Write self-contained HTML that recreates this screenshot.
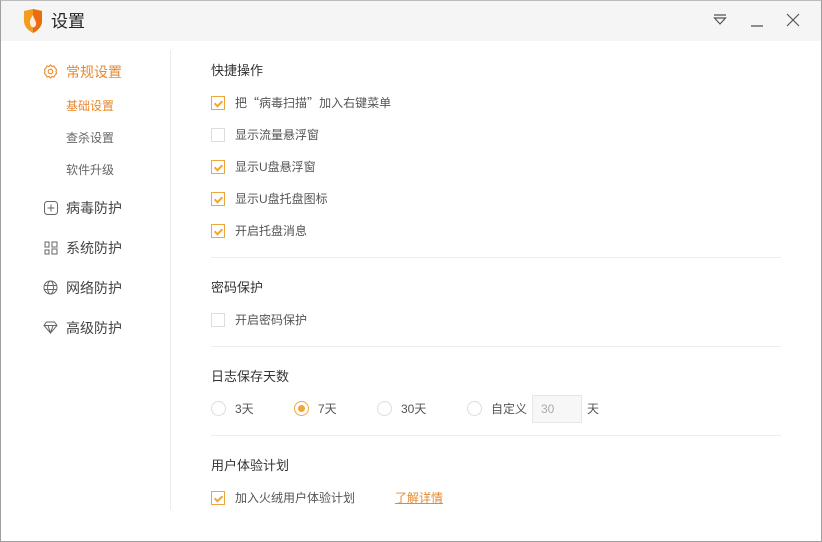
<!DOCTYPE html>
<html><head><meta charset="utf-8"><style>
*{margin:0;padding:0;box-sizing:border-box}
body{width:822px;height:542px;background:#fff;font-family:"Liberation Sans","Noto Sans CJK SC",sans-serif;position:relative;overflow:hidden;color:#333}
.win{position:absolute;left:0;top:0;width:822px;height:542px;border:1px solid #a0a0a0;border-top-color:#bbb}
.title{position:absolute;left:1px;top:1px;width:820px;height:40px;background:#f5f5f5}
.t{position:absolute;white-space:nowrap;line-height:1}
.side{font-size:14px;color:#444}
.sub{font-size:12px;color:#666}
.h{font-size:13px;color:#333}
.lbl{font-size:12px;color:#555}
.cb{position:absolute;width:14px;height:14px;border:1px solid #ddd;background:#fff}
.cb.on{border-color:#f0a53a}
.cb.on:after{content:"";position:absolute;left:4px;top:2px;width:3px;height:6px;border:solid #f0a53a;border-width:0 2px 2px 0;transform:rotate(45deg)}
.rd{position:absolute;width:15px;height:15px;border:1px solid #ddd;border-radius:50%}
.rd.on{border-color:#f0a53a}
.rd.on:after{content:"";position:absolute;left:3px;top:3px;width:7px;height:7px;border-radius:50%;background:#f0a53a}
.hr{position:absolute;left:211px;width:570px;height:1px;background:#ececec}
svg{position:absolute}
.cjk{font-family:"Noto Sans CJK SC",sans-serif}
</style></head><body>
<div class="win"></div>
<div class="title"></div>
<svg style="left:23px;top:9px" width="20" height="24" viewBox="0 0 20 24"><path d="M1 2 L10 0 L19 2 L19 12 C19 18 14 22 10 24 C6 22 1 18 1 12Z" fill="#f39c1f"/><path d="M10 0 L19 2 L19 12 C19 18 14 22 10 24Z" fill="#e96d0e"/><path d="M10 6 C7 10 6 13 8 17 C9 19 12 19 13 16 C14 13 11 10 10 6Z" fill="#fff" opacity=".85"/></svg>
<div class="t" style="left:51px;top:13px;font-size:17px;color:#222">设置</div>
<svg style="left:713px;top:14px" width="14" height="12"><path d="M1 1H13M1.5 4H12.5L7 10Z" fill="none" stroke="#555" stroke-width="1.2"/></svg>
<svg style="left:750px;top:14px" width="14" height="14"><path d="M1 12H13" stroke="#555" stroke-width="1.3"/></svg>
<svg style="left:786px;top:13px" width="14" height="14"><path d="M1 1L13 13M13 1L1 13" stroke="#555" stroke-width="1.2"/></svg>
<div style="position:absolute;left:170px;top:50px;width:1px;height:460px;background:#ececec"></div>
<svg style="left:43px;top:64px" width="15" height="15" viewBox="0 0 15 15"><path d="M7.5 1L9 2.5 11 2 12 4 13.5 5.5 13 7.5 13.5 9.5 12 11 11 13 9 12.5 7.5 14 6 12.5 4 13 3 11 1.5 9.5 2 7.5 1.5 5.5 3 4 4 2 6 2.5Z" fill="none" stroke="#e9882d" stroke-width="1.1"/><circle cx="7.5" cy="7.5" r="2.3" fill="none" stroke="#e9882d" stroke-width="1.1"/></svg>
<div class="t side" style="left:66px;top:65px;color:#e9882d">常规设置</div>
<div class="t sub" style="left:66px;top:100px;color:#e9882d">基础设置</div>
<div class="t sub" style="left:66px;top:132px">查杀设置</div>
<div class="t sub" style="left:66px;top:164px">软件升级</div>
<svg style="left:44px;top:201px" width="14" height="14"><rect x=".5" y=".5" width="13" height="13" rx="3" fill="none" stroke="#666"/><path d="M7 3.5V10.5M3.5 7H10.5" stroke="#666"/></svg>
<div class="t side" style="left:66px;top:201px">病毒防护</div>
<svg style="left:44px;top:241px" width="14" height="14"><path d="M1 1H5V6H1ZM1 9H5V13H1ZM8 1H13V6H8ZM8 8H13V13H8Z" fill="none" stroke="#666"/></svg>
<div class="t side" style="left:66px;top:241px">系统防护</div>
<svg style="left:43px;top:280px" width="15" height="15"><circle cx="7.5" cy="7.5" r="6.5" fill="none" stroke="#666"/><ellipse cx="7.5" cy="7.5" rx="3" ry="6.5" fill="none" stroke="#666"/><path d="M1 5.5H14M1 9.5H14" stroke="#666"/></svg>
<div class="t side" style="left:66px;top:281px">网络防护</div>
<svg style="left:43px;top:321px" width="15" height="13"><path d="M3.5 1H11.5L14 4.5 7.5 12 1 4.5ZM1 4.5H14M5 4.5 7.5 12 10 4.5" fill="none" stroke="#666"/></svg>
<div class="t side" style="left:66px;top:321px">高级防护</div>

<div class="t h" style="left:211px;top:64px">快捷操作</div>
<div class="cb on" style="left:211px;top:96px"></div><div class="t lbl" style="left:235px;top:97px">把<span class="cjk">“</span>病毒扫描<span class="cjk">”</span>加入右键菜单</div>
<div class="cb" style="left:211px;top:128px"></div><div class="t lbl" style="left:235px;top:129px">显示流量悬浮窗</div>
<div class="cb on" style="left:211px;top:160px"></div><div class="t lbl" style="left:235px;top:161px">显示U盘悬浮窗</div>
<div class="cb on" style="left:211px;top:192px"></div><div class="t lbl" style="left:235px;top:193px">显示U盘托盘图标</div>
<div class="cb on" style="left:211px;top:224px"></div><div class="t lbl" style="left:235px;top:225px">开启托盘消息</div>
<div class="hr" style="top:257px"></div>
<div class="t h" style="left:211px;top:281px">密码保护</div>
<div class="cb" style="left:211px;top:313px"></div><div class="t lbl" style="left:235px;top:314px">开启密码保护</div>
<div class="hr" style="top:346px"></div>
<div class="t h" style="left:211px;top:370px">日志保存天数</div>
<div class="rd" style="left:211px;top:401px"></div><div class="t lbl" style="left:235px;top:403px">3天</div>
<div class="rd on" style="left:294px;top:401px"></div><div class="t lbl" style="left:318px;top:403px">7天</div>
<div class="rd" style="left:377px;top:401px"></div><div class="t lbl" style="left:401px;top:403px">30天</div>
<div class="rd" style="left:467px;top:401px"></div><div class="t lbl" style="left:491px;top:403px">自定义</div>
<div style="position:absolute;left:532px;top:395px;width:50px;height:28px;background:#f7f7f7;border:1px solid #e6e6e6"></div>
<div class="t" style="left:541px;top:403px;font-size:12px;color:#aaa">30</div>
<div class="t lbl" style="left:587px;top:403px">天</div>
<div class="hr" style="top:435px"></div>
<div class="t h" style="left:211px;top:459px">用户体验计划</div>
<div class="cb on" style="left:211px;top:491px"></div><div class="t lbl" style="left:235px;top:492px">加入火绒用户体验计划</div>
<div class="t" style="left:395px;top:492px;font-size:12px;color:#e9882d;text-decoration:underline">了解详情</div>
</body></html>
